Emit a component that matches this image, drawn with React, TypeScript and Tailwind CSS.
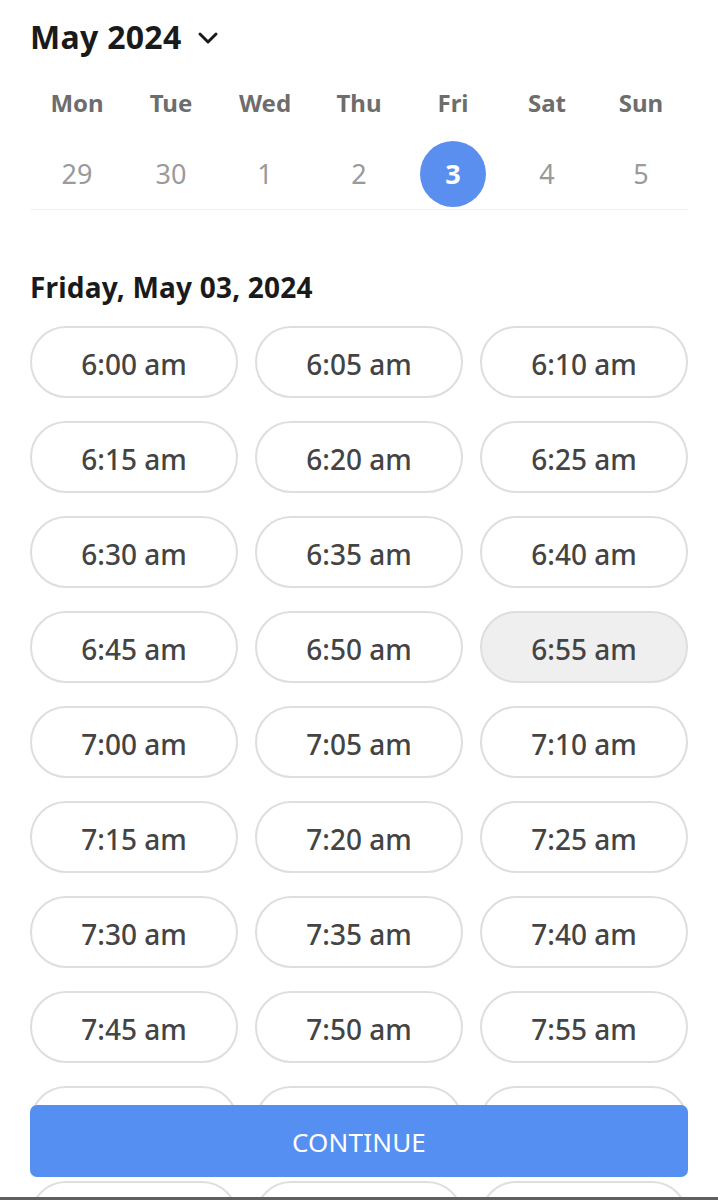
import React from "react";

const days = [
  { d: "Mon", n: "29" },
  { d: "Tue", n: "30" },
  { d: "Wed", n: "1" },
  { d: "Thu", n: "2" },
  { d: "Fri", n: "3", sel: true },
  { d: "Sat", n: "4" },
  { d: "Sun", n: "5" },
];

const times: string[] = [];
for (let h = 6; h <= 8; h++) {
  for (let m = 0; m < 60; m += 5) {
    if (h === 8 && m > 25) break;
    times.push(`${h}:${m.toString().padStart(2, "0")} am`);
  }
}

export default function App() {
  return (
    <div
      className="relative w-[718px] h-[1200px] overflow-hidden bg-white"
      style={{ fontFamily: '"Noto Sans", "Open Sans", sans-serif' }}
    >
      <div className="px-[30px]">
        <div className="flex h-[74px] items-center gap-[15px]">
          <span className="text-[32px] font-bold text-[#1a1a1a] leading-none tracking-[0.3px]">May 2024</span>
          <svg width="22" height="14" viewBox="0 0 22 14" className="mt-[2px]">
            <polyline points="3,3 11,11 19,3" fill="none" stroke="#1a1a1a" strokeWidth="3" strokeLinecap="round" strokeLinejoin="round" />
          </svg>
        </div>
        <div className="grid grid-cols-7 h-[58px] items-center">
          {days.map((x) => (
            <div key={x.d} className="text-center text-[24px] font-bold text-[#6d6d6d] leading-none">
              {x.d}
            </div>
          ))}
        </div>
        <div className="grid grid-cols-7 mt-[9px] h-[66px] items-center">
          {days.map((x) => (
            <div key={x.d} className="flex justify-center">
              {x.sel ? (
                <div className="w-[66px] h-[66px] rounded-full bg-[#5a8ff0] flex items-center justify-center text-white text-[27px] font-bold">
                  {x.n}
                </div>
              ) : (
                <span className="text-[27px] text-[#9a9a9a]">{x.n}</span>
              )}
            </div>
          ))}
        </div>
        <div className="mt-[2px] border-b border-[#f3f3f3]" />
        <div className="mt-[60px] h-[34px] flex items-center text-[28px] font-bold text-[#1a1a1a] leading-none tracking-[0.2px]">
          Friday, May 03, 2024
        </div>
        <div className="mt-[22px] grid grid-cols-3 gap-x-[17px] gap-y-[23px]">
          {times.map((t) => (
            <div
              key={t}
              className={`h-[72px] pt-[4px] rounded-full border-2 border-[#dedede] flex items-center justify-center text-[28px] font-medium text-[#444444] ${
                t === "6:55 am" ? "bg-[#efefef]" : "bg-white"
              }`}
            >
              {t}
            </div>
          ))}
        </div>
      </div>
      <button className="absolute left-[30px] right-[30px] top-[1105px] h-[72px] pt-[3px] rounded-[7px] bg-[#558ff2] text-white text-[26px] tracking-[0.2px]">
        CONTINUE
      </button>
      <div className="absolute left-0 right-0 bottom-0 h-[3px] bg-[#5f5f5f]" />
    </div>
  );
}
